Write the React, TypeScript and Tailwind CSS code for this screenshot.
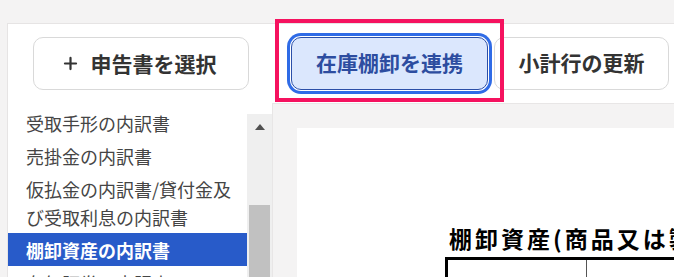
// Working-paper editor toolbar with schedule list and preview pane.

import { Plus } from "lucide-react";

const schedules = [
  { id: "notes", label: "受取手形の内訳書" },
  { id: "receivables", label: "売掛金の内訳書" },
  { id: "advances", label: "仮払金の内訳書/貸付金及び受取利息の内訳書" },
  { id: "inventory", label: "棚卸資産の内訳書" },
  { id: "securities", label: "有価証券の内訳書" },
];

const selectedId = "inventory";

function ListPane() {
  return (
    <div className="flex flex-1 min-h-0">
      <ul className="flex-1 min-w-0 pt-[3px] overflow-hidden">
        {schedules.map((item) => {
          const selected = item.id === selectedId;
          return (
            <li
              key={item.id}
              className={`pl-[18px] py-[2.5px] text-[18px] leading-[28px] ${
                selected ? "bg-[#285bc9] text-white font-bold" : "text-[#454545]"
              }`}
            >
              {item.label}
            </li>
          );
        })}
      </ul>
      {/* scrollbar */}
      <div className="w-[25px] shrink-0 mt-[11px] bg-[#efefef] flex flex-col items-center">
        <div className="h-[26px] w-full flex items-center justify-center">
          <div className="w-0 h-0 border-l-[5px] border-r-[5px] border-b-[6px] border-l-transparent border-r-transparent border-b-[#505050]" />
        </div>
        <div className="mt-[65px] w-[21px] flex-1 bg-[#c1c1c1]" />
      </div>
    </div>
  );
}

function Preview() {
  return (
    <div className="flex-1 min-h-0 bg-[#f4f3f3] border-l border-[#e8e6e6] pl-[24px] pt-[24px] overflow-hidden">
      <div className="h-full bg-white pl-[152px] pt-[97px]">
        <h2 className="text-[23px] leading-[26px] font-bold text-black tracking-[3px] whitespace-nowrap">
          棚卸資産(商品又は製品、半製品)の内訳書
        </h2>
        <div className="mt-[6px] -ml-[4px] flex h-[40px] border-t-[3px] border-l-[3px] border-black w-[600px]">
          <div className="w-[139px] border-r border-[#555]" />
          <div className="flex-1" />
        </div>
      </div>
    </div>
  );
}

export default function App() {
  return (
    <div
      className="relative w-[674px] h-[277px] overflow-hidden bg-[#f4f3f3] pt-[23px] pl-[7px]"
      style={{ fontFamily: '"Noto Sans CJK JP", "Noto Sans", sans-serif' }}
    >
      <div className="flex h-full bg-white border-t border-l border-[#e6e4e4]">
        <aside className="w-[264px] shrink-0 flex flex-col">
          <div className="h-[79px] shrink-0 flex items-center justify-center pl-[1px]">
            <button
              type="button"
              className="w-[216px] h-[53px] rounded-[10px] border border-[#d9d9d9] bg-white flex items-center justify-center gap-[11px] pr-[4px] text-[21px] font-bold text-[#333]"
            >
              <Plus size={19} strokeWidth={2.8} />
              申告書を選択
            </button>
          </div>
          <ListPane />
        </aside>

        <main className="flex-1 min-w-0 flex flex-col">
          <div className="h-[80px] shrink-0 border-b border-[#e8e6e6] flex items-center gap-[6px] pl-[19px] pb-[1px]">
            <button
              type="button"
              className="w-[197px] h-[53px] rounded-[10px] border border-[#2b4fa8] bg-[#dbe7fd] text-[21px] font-bold text-[#2d4da0] shadow-[0_0_0_1px_#ffffff,0_0_0_4px_#2f6be6]"
            >
              在庫棚卸を連携
            </button>
            <button
              type="button"
              className="w-[175px] h-[53px] rounded-[10px] border border-[#d9d9d9] bg-white text-[21px] font-bold text-[#333]"
            >
              小計行の更新
            </button>
          </div>
          <Preview />
        </main>
      </div>

      {/* highlight annotation */}
      <div className="absolute left-[275px] top-[19px] w-[229px] h-[83px] border-[4px] border-[#f5125f] pointer-events-none" />
    </div>
  );
}
